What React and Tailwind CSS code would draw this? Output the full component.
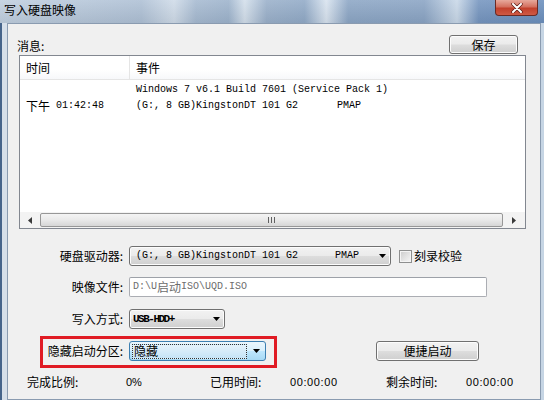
import React from "react";

const cjk = "font-['Noto_Sans_CJK_SC','Liberation_Sans',sans-serif]";
const mono = "font-['Liberation_Mono','Noto_Sans_CJK_SC',monospace]";
const btn =
  "flex items-center justify-center rounded-[3px] border border-[#707070] bg-[linear-gradient(180deg,#f2f2f2_0%,#ebebeb_48%,#dddddd_52%,#cfcfcf_100%)] text-[12px] leading-none text-black shadow-[inset_0_0_0_1px_#fcfcfc]";
const combo =
  "flex items-center h-[20px] rounded-[3px] border border-[#707070] bg-[linear-gradient(180deg,#f2f2f2_0%,#ebebeb_48%,#dddddd_52%,#cfcfcf_100%)] shadow-[inset_0_0_0_1px_#fcfcfc]";

function DownArrow() {
  return (
    <svg width="7" height="4" viewBox="0 0 7 4" className="shrink-0">
      <path d="M0 0h7L3.5 4z" fill="#000" />
    </svg>
  );
}

function Label({ children, w }) {
  return (
    <div className={`${cjk} ${w} shrink-0 pr-[1px] text-right text-[12px] leading-none text-black`}>
      {children}
    </div>
  );
}

export default function App() {
  return (
    <div className={`${cjk} flex h-[400px] w-[544px] flex-col overflow-hidden bg-[#f0f0f0]`}>
      {/* title bar */}
      <div className="flex h-[23px] shrink-0 items-start justify-between bg-[linear-gradient(180deg,rgba(255,255,255,0.12),rgba(0,0,0,0.06)),linear-gradient(90deg,#c0cfdf_0%,#aec0d5_26%,#cfdbe8_32%,#a6bad1_36%,#9db3cc_42%,#d3dfeb_45%,#9ab0ca_49%,#91aac7_56%,#d8e3ef_60%,#8ca6c5_64%,#8aa4c4_78%,#c9d8e8_84%,#7595bf_88%,#6b8fbd_100%)] pl-[4px]">
        <span className="pt-[4px] text-[12px] leading-none text-black">写入硬盘映像</span>
        <div className="mr-[6px] flex h-[16px] w-[43px] items-center justify-center rounded-b-[4px] border border-t-0 border-[#6b2a24] bg-[linear-gradient(180deg,#e7a99c_0%,#d4705f_45%,#c2402c_55%,#cf5a45_100%)]">
          <svg width="12" height="10" viewBox="0 0 12 10">
            <path d="M2 1l8 8M10 1l-8 8" stroke="#5a1a14" strokeWidth="3.4" strokeLinecap="round" />
            <path d="M2 1l8 8M10 1l-8 8" stroke="#ffffff" strokeWidth="2" strokeLinecap="round" />
          </svg>
        </div>
      </div>

      {/* body */}
      <div className="flex flex-1">
        <div className="w-[7px] shrink-0 border-l-2 border-[#46648a] bg-[#d6dfe9]" />
        <div className="flex w-[534px] shrink-0 flex-col border border-[#8a9bb0] bg-[#f0f0f0]">
          {/* message header */}
          <div className="flex items-center justify-between pl-[9px] pr-[22px] pt-[11px]">
            <span className="pt-[2px] text-[12px] leading-none text-black">消息:</span>
            <div className={`${btn} h-[19px] w-[69px]`}>保存</div>
          </div>

          {/* list view */}
          <div className="ml-[11px] mt-[1px] flex h-[174px] w-[507px] flex-col border border-[#828790] bg-white">
            <div className="flex h-[24px] shrink-0 border-b border-[#e5e5e5] bg-[linear-gradient(180deg,#ffffff_0%,#ffffff_60%,#f7f8fa_100%)]">
              <div className="flex w-[110px] items-center border-r border-[#e5e5e5] pl-[6px] text-[12px] leading-none">时间</div>
              <div className="flex items-center pl-[6px] text-[12px] leading-none">事件</div>
            </div>
            <div className="flex flex-1">
              <div className="w-[110px] shrink-0 pl-[6px] pt-[18px]">
                <div className="flex h-[16px] items-center whitespace-pre">
                  <span className="text-[12px] leading-none">下午</span>
                  <span className={`${mono} text-[10px] leading-none`}> 01:42:48</span>
                </div>
              </div>
              <div className={`${mono} pl-[6px] pt-[2px] text-[10px] leading-[16px] whitespace-pre text-black`}>
                <div>Windows 7 v6.1 Build 7601 (Service Pack 1)</div>
                <div>
                  (G:, 8 GB)KingstonDT 101 G2      <span className="ml-[3px]">PMAP</span>
                </div>
              </div>
            </div>
            {/* horizontal scrollbar */}
            <div className="flex h-[16px] shrink-0 bg-[#f3f3f3]">
              <div className="flex w-[20px] items-center justify-center">
                <svg width="4" height="7" viewBox="0 0 4 7">
                  <path d="M4 0v7L0 3.5z" fill="#3a3a3a" />
                </svg>
              </div>
              <div className="my-[1px] flex flex-1 items-center justify-center rounded-[2px] border border-[#979797] bg-[linear-gradient(180deg,#f4f4f4_0%,#e9e9e9_50%,#d6d6d6_100%)]">
                <div className="flex gap-[2px]">
                  <div className="h-[6px] w-[1px] bg-[#606060]" />
                  <div className="h-[6px] w-[1px] bg-[#606060]" />
                  <div className="h-[6px] w-[1px] bg-[#606060]" />
                </div>
              </div>
              <div className="flex w-[22px] items-center justify-center">
                <svg width="4" height="7" viewBox="0 0 4 7">
                  <path d="M0 0v7L4 3.5z" fill="#3a3a3a" />
                </svg>
              </div>
            </div>
          </div>

          {/* form */}
          <div className="mt-[17px] flex items-center">
            <Label w="w-[116px]">硬盘驱动器:</Label>
            <div className={`${combo} ml-[5px] w-[262px] justify-between pl-[6px] pr-[4px]`}>
              <span className={`${mono} whitespace-pre text-[10px] leading-none`}>
                (G:, 8 GB)KingstonDT 101 G2      <span className="ml-[1px]">PMAP</span>
              </span>
              <DownArrow />
            </div>
            <div className="ml-[8px] h-[13px] w-[13px] border border-[#8e8f8f] bg-[linear-gradient(135deg,#cbcbcb_0%,#e6e6e6_60%,#f6f6f6_100%)] shadow-[inset_0_0_0_1px_#f4f4f4]" />
            <span className="ml-[2px] text-[12px] leading-none">刻录校验</span>
          </div>

          <div className="mt-[11px] flex items-center">
            <Label w="w-[116px]">映像文件:</Label>
            <div className="ml-[5px] flex h-[20px] w-[358px] items-center rounded-[2px] border border-[#abadb3] border-t-[#9da1a8] bg-white pl-[3px] text-[#6d6d6d]">
              <span className={`${mono} text-[10px] leading-none`}>D:\U</span>
              <span className="text-[12px] leading-none">启动</span>
              <span className={`${mono} text-[10px] leading-none`}>ISO\UQD.ISO</span>
            </div>
          </div>

          <div className="mt-[12px] flex items-center">
            <Label w="w-[116px]">写入方式:</Label>
            <div className={`${combo} ml-[5px] w-[96px] justify-between pl-[3px] pr-[4px]`}>
              <span className={`${mono} text-[11px] font-bold leading-none tracking-[-1.5px]`}>USB-HDD+</span>
              <DownArrow />
            </div>
          </div>

          <div className="mt-[7px] flex items-start">
            <div className="ml-[32px] flex h-[32px] w-[237px] items-start border-[3px] border-[#e01b24] pt-[2px]">
              <Label w="w-[81px]">
                <div className="flex h-[20px] items-center justify-end">隐藏启动分区:</div>
              </Label>
              <div className="ml-[5px] flex h-[20px] w-[137px] items-center rounded-[3px] border border-[#3c7fb1] bg-[linear-gradient(180deg,#eaf6fd_0%,#d9f0fc_48%,#bee6fd_52%,#a7d9f5_100%)]">
                <div className="ml-[2px] flex h-[15px] w-[115px] items-center border border-dotted border-[#333] bg-[linear-gradient(180deg,#e4f2fb_0%,#c6e4f7_100%)] pl-[1px]">
                  <span className="text-[12px] leading-none">隐藏</span>
                </div>
                <div className="flex flex-1 justify-center">
                  <DownArrow />
                </div>
              </div>
            </div>
            <div className={`${btn} ml-[99px] mt-[5px] h-[20px] w-[103px]`}>便捷启动</div>
          </div>

          <div className="mt-[7px] flex h-[14px] items-center pl-[19px] text-black">
            <span className="w-[99px] shrink-0 text-[12px] leading-none">完成比例:</span>
            <span className="w-[84px] shrink-0 font-['Liberation_Sans',sans-serif] text-[11px] leading-none">0%</span>
            <span className="w-[80px] shrink-0 text-[12px] leading-none">已用时间:</span>
            <span className="w-[96px] shrink-0 font-['Liberation_Sans',sans-serif] text-[11px] leading-none tracking-[0.6px]">00:00:00</span>
            <span className="w-[80px] shrink-0 text-[12px] leading-none">剩余时间:</span>
            <span className="font-['Liberation_Sans',sans-serif] text-[11px] leading-none tracking-[0.6px]">00:00:00</span>
          </div>
        </div>
        <div className="flex-1 bg-[#c6d5e4]" />
      </div>
    </div>
  );
}
